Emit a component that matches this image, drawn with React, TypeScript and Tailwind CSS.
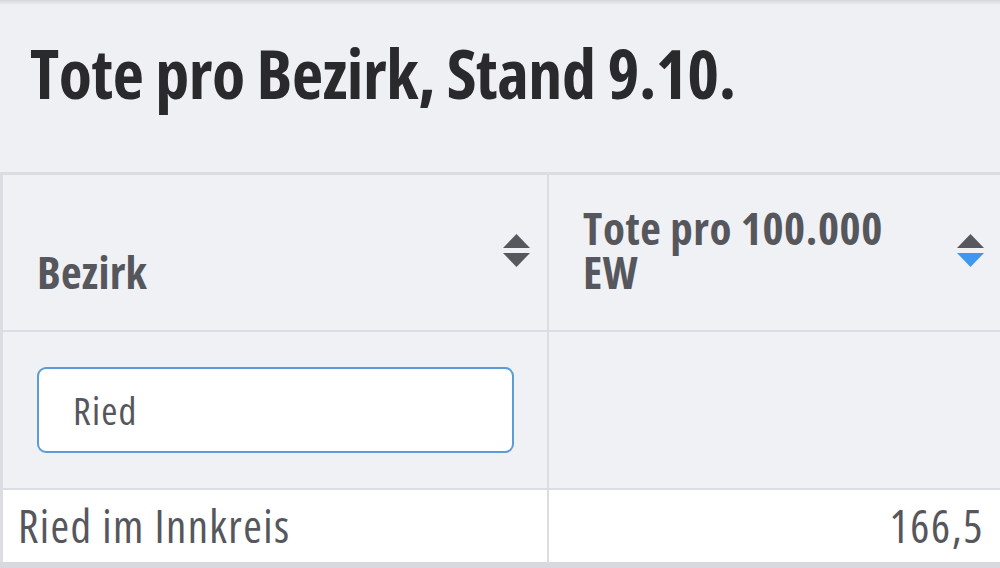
function SortIcon({ active }: { active?: boolean }) {
  return (
    <svg width="27" height="33" viewBox="0 0 27 33" className="shrink-0">
      <polygon points="13.5,0 27,14 0,14" fill="#56585d" />
      <polygon points="0,19 27,19 13.5,33" fill={active ? "#3f97f0" : "#56585d"} />
    </svg>
  );
}

export default function App() {
  return (
    <div className="w-[1000px] h-[568px] overflow-hidden bg-[#eff0f4] flex flex-col font-['Open_Sans',sans-serif] font-stretch-condensed">
      <div className="h-[5px] bg-gradient-to-b from-[#d6d7dc] to-[#eff0f4]" />
      <div className="h-[167px] pl-[30px] pt-[28px]">
        <h1 className="text-[68px] leading-[80px] font-bold text-[#2a2a2c] tracking-[-0.4px]">
          Tote pro Bezirk, Stand 9.10.
        </h1>
      </div>
      <div className="flex-1 flex flex-col border-t-[3px] border-l-[3px] border-[#dcdde2]">
        <div className="grid grid-cols-[546px_1fr] h-[157px] border-b-2 border-[#dcdde2] bg-[#f0f1f5]">
          <div className="flex items-end justify-between pl-[34px] pr-[18px] pb-[36px] border-r-2 border-[#dcdde2] relative">
            <span className="text-[45px] leading-[44px] font-bold text-[#56575c] tracking-[0.3px]">Bezirk</span>
            <div className="absolute right-[17px] top-[59px]">
              <SortIcon />
            </div>
          </div>
          <div className="flex items-end justify-between pl-[34px] pr-[17px] pb-[36px] relative">
            <span className="text-[45px] leading-[44px] font-bold text-[#56575c] tracking-[0.6px] w-[340px]">Tote pro 100.000 EW</span>
            <div className="absolute right-[16px] top-[59px]">
              <SortIcon active />
            </div>
          </div>
        </div>
        <div className="grid grid-cols-[546px_1fr] h-[158px] border-b-2 border-[#dcdde2] bg-[#f0f1f5]">
          <div className="flex items-center pl-[34px] pr-[33px] border-r-2 border-[#dcdde2]">
            <div className="w-full h-[86px] rounded-[9px] border-2 border-[#5b9bd6] bg-white flex items-center pl-[34px]">
              <span className="text-[39px] text-[#56575c] tracking-[1.2px]">Ried</span>
            </div>
          </div>
          <div />
        </div>
        <div className="grid grid-cols-[546px_1fr] h-[72px] bg-white">
          <div className="flex items-center pl-[15px] border-r-2 border-[#dcdde2]">
            <span className="text-[45px] text-[#56575c] tracking-[1.4px]">Ried im Innkreis</span>
          </div>
          <div className="flex items-center justify-end pr-[16px]">
            <span className="text-[45px] text-[#56575c] tracking-[1.6px]">166,5</span>
          </div>
        </div>
      </div>
      <div className="h-[6px] bg-[#d8d9de]" />
    </div>
  );
}
